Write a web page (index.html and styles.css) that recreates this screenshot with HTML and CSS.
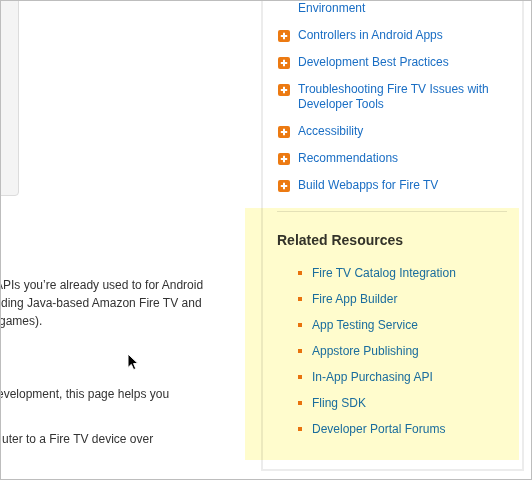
FILE: index.html
```html
<!DOCTYPE html>
<html lang="en">
<head>
<meta charset="utf-8">
<title>Fire TV docs</title>
<link rel="stylesheet" href="styles.css">
</head>
<body>
<div class="frame">
  <div class="layout">
    <main class="main">
      <div class="card"></div>
      <p class="para first">
        <span class="line o1">APIs you’re already used to for Android</span>
        <span class="line o2">ding Java-based Amazon Fire TV and</span>
        <span class="line o3">games).</span>
      </p>
      <p class="para second">
        <span class="line o4">evelopment, this page helps you</span>
      </p>
      <p class="para third">
        <span class="line o5">uter to a Fire TV device over</span>
      </p>
    </main>
    <aside class="sidebar">
      <ul class="nav">
        <li><svg class="plus" viewBox="0 0 12 12"><rect width="12" height="12" rx="2" fill="#ec7a12"/><path d="M6 2.8v6.4M2.8 6h6.4" stroke="#fff" stroke-width="2"/></svg><a href="#">Setting Up Your Development Environment</a></li>
        <li><svg class="plus" viewBox="0 0 12 12"><rect width="12" height="12" rx="2" fill="#ec7a12"/><path d="M6 2.8v6.4M2.8 6h6.4" stroke="#fff" stroke-width="2"/></svg><a href="#">Controllers in Android Apps</a></li>
        <li><svg class="plus" viewBox="0 0 12 12"><rect width="12" height="12" rx="2" fill="#ec7a12"/><path d="M6 2.8v6.4M2.8 6h6.4" stroke="#fff" stroke-width="2"/></svg><a href="#">Development Best Practices</a></li>
        <li><svg class="plus" viewBox="0 0 12 12"><rect width="12" height="12" rx="2" fill="#ec7a12"/><path d="M6 2.8v6.4M2.8 6h6.4" stroke="#fff" stroke-width="2"/></svg><a href="#">Troubleshooting Fire TV Issues with Developer Tools</a></li>
        <li><svg class="plus" viewBox="0 0 12 12"><rect width="12" height="12" rx="2" fill="#ec7a12"/><path d="M6 2.8v6.4M2.8 6h6.4" stroke="#fff" stroke-width="2"/></svg><a href="#">Accessibility</a></li>
        <li><svg class="plus" viewBox="0 0 12 12"><rect width="12" height="12" rx="2" fill="#ec7a12"/><path d="M6 2.8v6.4M2.8 6h6.4" stroke="#fff" stroke-width="2"/></svg><a href="#">Recommendations</a></li>
        <li><svg class="plus" viewBox="0 0 12 12"><rect width="12" height="12" rx="2" fill="#ec7a12"/><path d="M6 2.8v6.4M2.8 6h6.4" stroke="#fff" stroke-width="2"/></svg><a href="#">Build Webapps for Fire TV</a></li>
      </ul>
      <hr class="sep">
      <h3 class="res-title">Related Resources</h3>
      <ul class="res">
        <li><a href="#">Fire TV Catalog Integration</a></li>
        <li><a href="#">Fire App Builder</a></li>
        <li><a href="#">App Testing Service</a></li>
        <li><a href="#">Appstore Publishing</a></li>
        <li><a href="#">In-App Purchasing API</a></li>
        <li><a href="#">Fling SDK</a></li>
        <li><a href="#">Developer Portal Forums</a></li>
      </ul>
    </aside>
  </div>
  <div class="highlight"></div>
  <svg class="cursor" viewBox="0 0 12 18"><path d="M1 1 L1 14.5 L4.3 11.4 L6.6 16.6 L8.8 15.7 L6.6 10.6 L11 10.6 Z" fill="#000" stroke="#fff" stroke-width="1" stroke-linejoin="round"/></svg>
</div>
</body>
</html>
```

FILE: styles.css
```css
html, body {
  margin: 0;
  padding: 0;
  background: #fff;
}

.frame {
  position: relative;
  width: 532px;
  height: 480px;
  box-sizing: border-box;
  border: 1px solid #bdbdbd;
  overflow: hidden;
  font-family: "Liberation Sans", Arial, Helvetica, sans-serif;
  font-size: 12px;
  color: #333;
}

.layout {
  display: flex;
  align-items: flex-start;
}

.main {
  width: 260px;
  flex: none;
}

.card {
  box-sizing: border-box;
  width: 318px;
  height: 205px;
  margin: -10px 0 0 -300px;
  background: #f4f4f4;
  border: 1px solid #dcdcdc;
  border-radius: 4px;
}

.para {
  margin: 0;
  line-height: 18px;
}

.para.first { margin-top: 80px; }
.para.second { margin-top: 55px; }
.para.third { margin-top: 27px; }

.line {
  display: block;
  white-space: nowrap;
}

.o1 { margin-left: -6px; }
.o2 { margin-left: 0; }
.o3 { margin-left: -2px; }
.o4 { margin-left: -4px; }
.o5 { margin-left: 1px; }

.sidebar {
  box-sizing: border-box;
  width: 263px;
  flex: none;
  margin-top: -18px;
  padding: 0 15px 32px 15px;
  border: 2px solid #ececec;
}

.nav {
  list-style: none;
  margin: 0;
  padding: 0;
}

.nav li {
  display: flex;
  align-items: flex-start;
  gap: 8px;
  line-height: 15.5px;
  margin-bottom: 11.5px;
}

.nav li:last-child { margin-bottom: 0; }

.plus {
  width: 12px;
  height: 12px;
  flex: none;
  margin-top: 2px;
}

a {
  color: #1a6ec4;
  text-decoration: none;
}

.sep {
  border: 0;
  border-top: 1px solid #e4e4e4;
  margin: 17.5px 0 0 -1px;
  height: 0;
}

.res-title {
  margin: 19px 0 16px -1px;
  font-size: 14px;
  line-height: 18px;
  font-weight: bold;
  color: #333;
}

.res {
  list-style: none;
  margin: 0;
  padding: 0;
}

.res li {
  display: flex;
  align-items: center;
  line-height: 16px;
  margin-bottom: 10px;
}

.res li:last-child { margin-bottom: 0; }

.res li::before {
  content: "";
  width: 4px;
  height: 4px;
  background: #e8730f;
  margin: 0 10px 0 20px;
  flex: none;
}

.highlight {
  position: absolute;
  left: 244px;
  top: 207px;
  width: 274px;
  height: 252px;
  background: #fffccd;
  mix-blend-mode: multiply;
  pointer-events: none;
}

.cursor {
  position: absolute;
  left: 126px;
  top: 352px;
  width: 12px;
  height: 18px;
}
```
